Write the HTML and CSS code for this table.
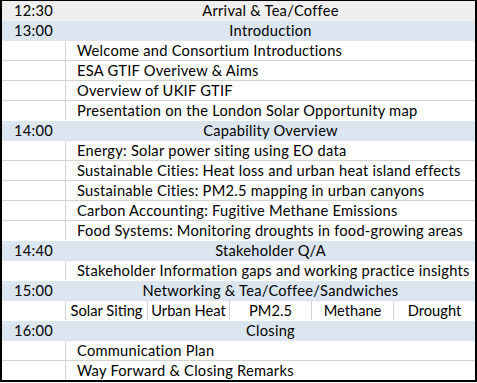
FILE: index.html
```html
<!DOCTYPE html>
<html>
<head>
<meta charset="utf-8">
<link rel="stylesheet" href="styles.css">
</head>
<body>
<div class="agenda">
  <div class="row grey"><div class="time">12:30</div><div class="title">Arrival &amp; Tea/Coffee</div></div>
  <div class="row blue"><div class="time">13:00</div><div class="title">Introduction</div></div>
  <div class="row item ruled"><div class="time"></div><div class="text">Welcome and Consortium Introductions</div></div>
  <div class="row item ruled"><div class="time"></div><div class="text">ESA GTIF Overivew &amp; Aims</div></div>
  <div class="row item ruled"><div class="time"></div><div class="text">Overview of UKIF GTIF</div></div>
  <div class="row item"><div class="time"></div><div class="text">Presentation on the London Solar Opportunity map</div></div>
  <div class="row blue"><div class="time">14:00</div><div class="title">Capability Overview</div></div>
  <div class="row item ruled"><div class="time"></div><div class="text">Energy: Solar power siting using EO data</div></div>
  <div class="row item ruled"><div class="time"></div><div class="text">Sustainable Cities: Heat loss and urban heat island effects</div></div>
  <div class="row item ruled"><div class="time"></div><div class="text">Sustainable Cities: PM2.5 mapping in urban canyons</div></div>
  <div class="row item ruled"><div class="time"></div><div class="text">Carbon Accounting: Fugitive Methane Emissions</div></div>
  <div class="row item"><div class="time"></div><div class="text">Food Systems: Monitoring droughts in food-growing areas</div></div>
  <div class="row blue"><div class="time">14:40</div><div class="title">Stakeholder Q/A</div></div>
  <div class="row item"><div class="time"></div><div class="text">Stakeholder Information gaps and working practice insights</div></div>
  <div class="row blue"><div class="time">15:00</div><div class="title">Networking &amp; Tea/Coffee/Sandwiches</div></div>
  <div class="row item"><div class="time"></div>
    <div class="split">
      <div class="cell">Solar Siting</div>
      <div class="cell">Urban Heat</div>
      <div class="cell">PM2.5</div>
      <div class="cell">Methane</div>
      <div class="cell">Drought</div>
    </div>
  </div>
  <div class="row blue"><div class="time">16:00</div><div class="title">Closing</div></div>
  <div class="row item ruled"><div class="time"></div><div class="text">Communication Plan</div></div>
  <div class="row item last"><div class="time"></div><div class="text">Way Forward &amp; Closing Remarks</div></div>
</div>
</body>
</html>
```

FILE: styles.css
```css
html, body {
  margin: 0;
  padding: 0;
  background: #ffffff;
}
body {
  width: 477px;
  height: 383px;
  overflow: hidden;
  font-family: Lato, "Open Sans", sans-serif;
  font-size: 14.67px;
  letter-spacing: 0.25px;
  color: #000;
}
.agenda {
  width: 477px;
  box-sizing: border-box;
  border-top: 1px solid #000;
  border-left: 2px solid #000;
  border-right: 2px solid #000;
  border-bottom: 2px solid #000;
}
.row {
  display: flex;
  height: 20px;
  box-sizing: border-box;
  border-bottom: 1px solid transparent;
  line-height: 18px;
  white-space: nowrap;
}
.row.grey { background: #efefef; }
.row.blue { background: #dce6f1; }
.row.ruled { border-bottom-color: #d4d4d4; }
.row.last { height: 19px; border-bottom: 0; }
.time {
  width: 64px;
  flex: none;
  box-sizing: border-box;
  border-right: 1px solid transparent;
  text-align: center;
  padding-top: 1px;
}
.item .time { border-right-color: #d4d4d4; }
.title {
  flex: 1;
  text-align: center;
  padding-top: 1px;
}
.text {
  flex: 1;
  padding-left: 11px;
  padding-top: 1px;
}
.split {
  flex: 1;
  display: flex;
}
.cell {
  width: 82px;
  box-sizing: border-box;
  border-right: 1px solid #d4d4d4;
  text-align: center;
  padding-top: 1px;
  letter-spacing: 0;
}
.cell:last-child {
  width: 81px;
  border-right: 0;
}
```
